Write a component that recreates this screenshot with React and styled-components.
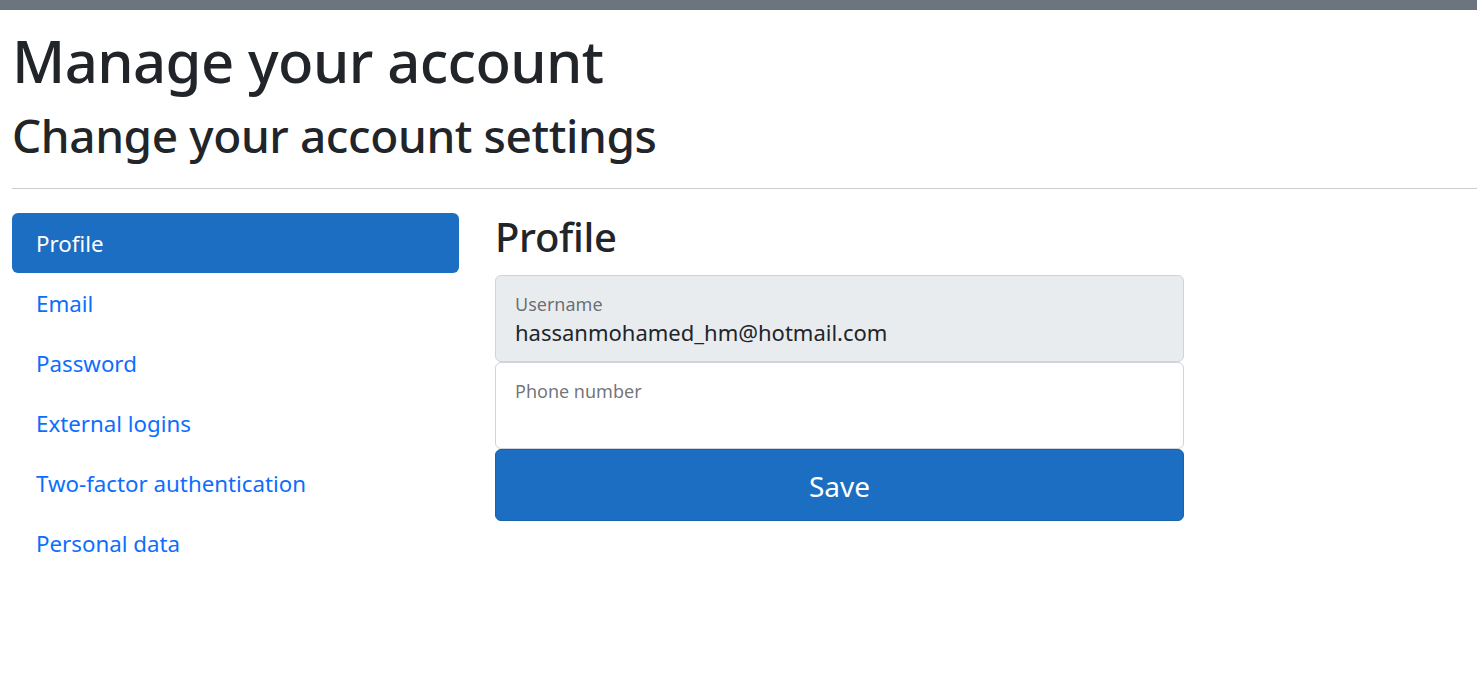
import React from "react";
import styled, { createGlobalStyle } from "styled-components";

const GlobalStyle = createGlobalStyle`
  html, body { margin: 0; padding: 0; background: #fff; }
  body {
    font-family: "Noto Sans", "Open Sans", sans-serif;
    color: #212529;
    font-size: 24px;
    line-height: 1.5;
  }
  * { box-sizing: border-box; }
`;

const TopBar = styled.div`
  height: 10px;
  background: #6c757d;
`;

const Container = styled.main`
  padding: 0 0 0 12px;
`;

const Title = styled.h1`
  margin: 0;
  padding-top: 16px;
  font-size: 58px;
  font-weight: 500;
  line-height: 1.2;
  letter-spacing: -0.6px;
`;

const Subtitle = styled.h2`
  margin: 12px 0 0;
  font-size: 46px;
  font-weight: 500;
  line-height: 1.2;
  letter-spacing: -0.4px;
`;

const Divider = styled.hr`
  margin: 25px 0 24px;
  border: 0;
  border-top: 1px solid #cbcccd;
`;

const Row = styled.div`
  display: flex;
  gap: 36px;
  align-items: flex-start;
`;

const SideNav = styled.nav`
  width: 447px;
  display: flex;
  flex-direction: column;
`;

const NavLink = styled.a`
  display: block;
  height: 60px;
  padding: 13px 24px 11px;
  font-size: 22.3px;
  line-height: 36px;
  border-radius: 6px;
  text-decoration: none;
  color: ${(p) => (p.$active ? "#fff" : "#0d6efd")};
  background: ${(p) => (p.$active ? "#1b6ec2" : "transparent")};
`;

const FormCol = styled.section`
  width: 689px;
  display: flex;
  flex-direction: column;
`;

const SectionTitle = styled.h3`
  margin: 0 0 14px;
  font-size: 40px;
  font-weight: 500;
  line-height: 1.2;
  letter-spacing: -0.3px;
`;

const Field = styled.div`
  height: 87px;
  border: 1px solid #ced4da;
  border-radius: 6px;
  padding: 16px 19px 0;
  background: ${(p) => (p.$disabled ? "#e9ecef" : "#fff")};
  display: flex;
  flex-direction: column;
`;

const FieldLabel = styled.label`
  font-size: 18px;
  line-height: 24px;
  color: rgba(33, 37, 41, 0.65);
`;

const FieldValue = styled.div`
  font-size: 22px;
  line-height: 32px;
  color: #212529;
`;

const SaveButton = styled.button`
  height: 72px;
  padding: 3px 0 0;
  border: 1px solid #1861ac;
  border-radius: 6px;
  background: #1b6ec2;
  color: #fff;
  font-family: inherit;
  font-size: 28px;
  line-height: 1.5;
  cursor: pointer;
`;

const navItems = [
  "Profile",
  "Email",
  "Password",
  "External logins",
  "Two-factor authentication",
  "Personal data",
];

export default function App() {
  return (
    <>
      <GlobalStyle />
      <TopBar />
      <Container>
        <Title>Manage your account</Title>
        <Subtitle>Change your account settings</Subtitle>
        <Divider />
        <Row>
          <SideNav>
            {navItems.map((item, i) => (
              <NavLink key={item} href="#" $active={i === 0}>
                {item}
              </NavLink>
            ))}
          </SideNav>
          <FormCol>
            <SectionTitle>Profile</SectionTitle>
            <Field $disabled>
              <FieldLabel>Username</FieldLabel>
              <FieldValue>hassanmohamed_hm@hotmail.com</FieldValue>
            </Field>
            <Field>
              <FieldLabel>Phone number</FieldLabel>
            </Field>
            <SaveButton>Save</SaveButton>
          </FormCol>
        </Row>
      </Container>
    </>
  );
}
